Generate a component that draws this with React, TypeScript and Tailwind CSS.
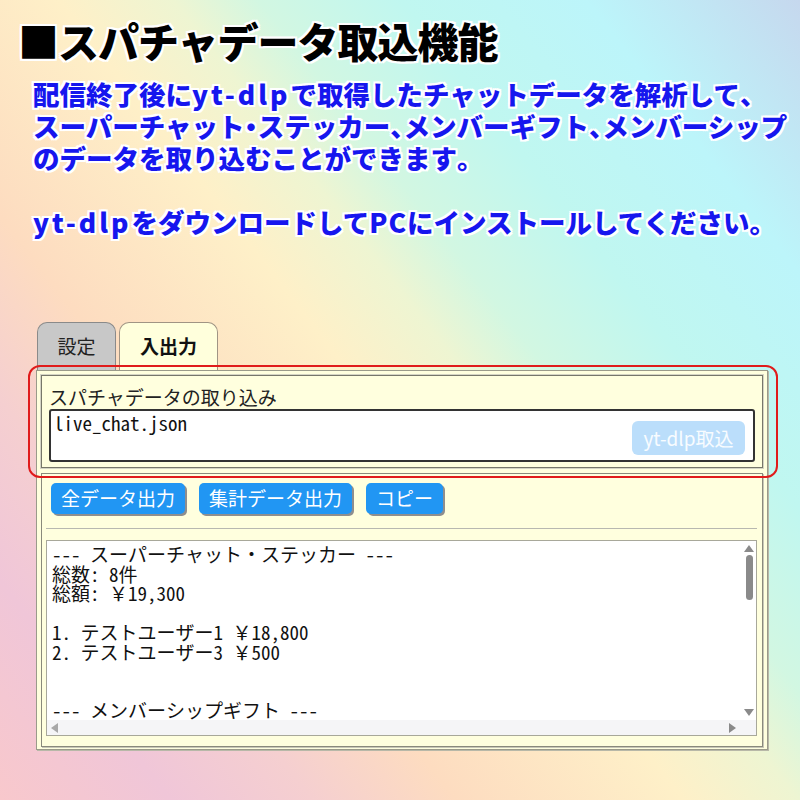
import React from "react";

function TriUp() {
  return (
    <svg width="10" height="7" viewBox="0 0 10 7"><path d="M5 0 L10 7 L0 7 Z" fill="#8a8a8a" /></svg>
  );
}
function TriDown() {
  return (
    <svg width="10" height="7" viewBox="0 0 10 7"><path d="M0 0 L10 0 L5 7 Z" fill="#8a8a8a" /></svg>
  );
}
function TriLeft() {
  return (
    <svg width="7" height="10" viewBox="0 0 7 10"><path d="M7 0 L7 10 L0 5 Z" fill="#a8a8a8" /></svg>
  );
}
function TriRight() {
  return (
    <svg width="7" height="10" viewBox="0 0 7 10"><path d="M0 0 L7 5 L0 10 Z" fill="#8a8a8a" /></svg>
  );
}

function P({ children }: { children: React.ReactNode }) {
  return <span className="[font-feature-settings:'halt']">{children}</span>;
}
function Y({ children }: { children: React.ReactNode }) {
  return <span className="tracking-[3px]">{children}</span>;
}

export default function App() {
  const lines = [
    "--- スーパーチャット・ステッカー ---",
    "総数: 8件",
    "総額: ￥19,300",
    "\u00a0",
    "1. テストユーザー1 ￥18,800",
    "2. テストユーザー3 ￥500",
    "\u00a0",
    "\u00a0",
    "--- メンバーシップギフト ---",
  ];
  return (
    <div className="relative w-[800px] h-[800px] overflow-hidden bg-[linear-gradient(52deg,#f8c8cc_0%,#f0c6d8_12%,#f5cfd0_22%,#fddcc0_32%,#fef0c8_48%,#eef5d2_56%,#d2f7e2_62%,#c0f7f0_72%,#bcf5fa_85%,#c6d8ee_100%)] font-['Noto_Sans_CJK_JP',sans-serif]">
      <h1 className="pt-[15px] pl-[18px] text-[41px] leading-[50px] font-black tracking-[-1px] text-black [text-shadow:2px_0_0_#fff,-2px_0_0_#fff,0_2px_0_#fff,0_-2px_0_#fff,2px_2px_0_#fff,-2px_-2px_0_#fff,2px_-2px_0_#fff,-2px_2px_0_#fff]">
        ■スパチャデータ取込機能
      </h1>
      <div className="mt-[13px] pl-[33px] text-[26.5px] leading-[32px] font-black text-[#1616ee] whitespace-nowrap [text-shadow:2px_0_0_#fff,-2px_0_0_#fff,0_2px_0_#fff,0_-2px_0_#fff,2px_2px_0_#fff,-2px_-2px_0_#fff,2px_-2px_0_#fff,-2px_2px_0_#fff]">
        <p>
          配信終了後に<Y>yt-dlp</Y>で取得したチャットデータを解析して<P>、</P>
        </p>
        <p>
          スーパーチャット<P>・</P>ステッカー<P>、</P>メンバーギフト<P>、</P>メンバーシップ
        </p>
        <p>
          のデータを取り込むことができます<P>。</P>
        </p>
        <p>&nbsp;</p>
        <p>
          <Y>yt-dlp</Y>をダウンロードして<span className="tracking-[1px]">PC</span>にインストールしてください<P>。</P>
        </p>
      </div>

      <div className="mt-[84px] ml-[36px] w-[732px]">
        <div className="flex items-end gap-[3px] pl-[1px]">
          <div className="w-[79px] h-[48px] flex items-center justify-center bg-[#c8c8c8] border border-b-0 border-[#8a8a8a] rounded-t-[10px] text-[19px] text-[#222]">
            設定
          </div>
          <div className="w-[99px] h-[48px] flex items-center justify-center bg-[#ffffdc] border border-b-0 border-[#a09484] rounded-t-[10px] text-[19px] font-bold text-[#111]">
            入出力
          </div>
        </div>
        <div className="h-[380px] bg-[#ffffde] border border-[#9a9a8a] shadow-[1px_1px_0_#b8b8a8] pt-[4px] pl-[4px] pr-[4px]">
          <div className="h-[93px] border border-[#77776a] shadow-[0_0_0_1px_#d4d4c4] pl-[7px] pr-[7px] pt-[9px]">
            <div className="text-[19px] leading-[24px] text-[#222]">スパチャデータの取り込み</div>
            <div className="h-[53px] bg-white border-2 border-[#333] rounded-[3px] flex justify-between pl-[3px] pr-[8px] pb-[5px]">
              <span className="font-['Noto_Sans_Mono_CJK_JP','Noto_Sans_CJK_JP',monospace] text-[19px] leading-[24px] text-[#111]">
                live_chat.json
              </span>
              <div className="self-end w-[113px] h-[34px] flex items-center justify-center bg-[#bbdefb] rounded-[6px] text-[19px] text-white/90">
                yt-dlp取込
              </div>
            </div>
          </div>

          <div className="mt-[5px] h-[274px] border border-[#8a8a7c] shadow-[1px_1px_0_#c8c8b8] pl-[4px] pr-[5px] pt-[9px] pb-[10px]">
            <div className="flex gap-[14px] pl-[5px]">
              <div className="h-[31px] px-[10px] flex items-center bg-[#2196f3] text-white text-[19px] rounded-[5px] shadow-[2px_2px_0_#8e8e8e]">
                全データ出力
              </div>
              <div className="h-[31px] px-[10px] flex items-center bg-[#2196f3] text-white text-[19px] rounded-[5px] shadow-[2px_2px_0_#8e8e8e]">
                集計データ出力
              </div>
              <div className="h-[31px] px-[10px] flex items-center bg-[#2196f3] text-white text-[19px] rounded-[5px] shadow-[2px_2px_0_#8e8e8e]">
                コピー
              </div>
            </div>
            <div className="mt-[14px] h-px bg-[#b8b8b0]" />
            <div className="mt-[11px] h-[196px] bg-white border border-[#a8a89a] grid grid-cols-[1fr_14px] grid-rows-[1fr_15px]">
              <div className="overflow-hidden pl-[5px] pt-[3px] font-['Noto_Sans_Mono_CJK_JP','Noto_Sans_CJK_JP',monospace] text-[19px] leading-[19.5px] text-[#111] whitespace-pre">
                {lines.map((l, i) => (
                  <div key={i}>{l}</div>
                ))}
              </div>
              <div className="flex flex-col items-center pt-[4px] pb-[4px]">
                <TriUp />
                <div className="mt-[3px] w-[7px] h-[45px] rounded-full bg-[#8a8a8a]" />
                <div className="flex-1" />
                <TriDown />
              </div>
              <div className="bg-[#f5f5f7] flex items-center justify-between pl-[4px] pr-[6px]">
                <TriLeft />
                <TriRight />
              </div>
              <div className="bg-[#f5f5f7]" />
            </div>
          </div>
        </div>
      </div>

      <div className="absolute left-[28px] top-[365px] w-[750px] h-[113px] border-2 border-[#e01b1b] rounded-[12px]" />
    </div>
  );
}
